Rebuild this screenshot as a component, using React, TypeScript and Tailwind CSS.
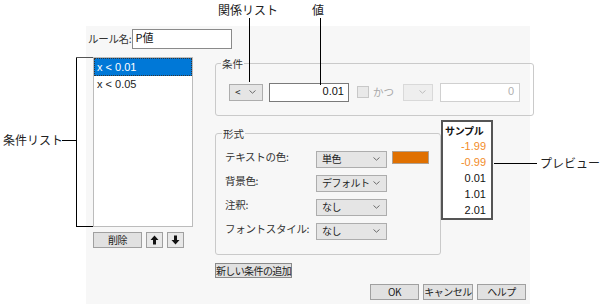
import React from 'react';

const jp = "font-['Noto_Sans_CJK_JP','Noto_Sans',sans-serif] whitespace-nowrap";
const lat = "font-['Liberation_Sans','Noto_Sans_CJK_JP',sans-serif] whitespace-nowrap";

const Chevron = ({ color = '#6b6b6b' }: { color?: string }) => (
  <svg width="7" height="4" viewBox="0 0 7 4">
    <path d="M0.5 0.5 L3.5 3.2 L6.5 0.5" fill="none" stroke={color} strokeWidth="1" />
  </svg>
);

const Select = ({ label, width, disabled }: { label?: string; width: string; disabled?: boolean }) => (
  <div
    className={`${width} h-[17px] flex items-center justify-between pl-[5px] pr-[6px] border ${
      disabled ? 'border-[#d9d9d9] bg-[#eeeeee]' : 'border-[#adadad] bg-[#e5e5e5]'
    } text-[10px] tracking-[-0.5px] text-[#222] ${jp}`}
  >
    <span className="leading-none">{label}</span>
    <Chevron color={disabled ? '#bdbdbd' : '#6b6b6b'} />
  </div>
);

const Button = ({ children, width }: { children: React.ReactNode; width: string }) => (
  <button
    className={`${width} h-[16px] border border-[#a0a0a0] bg-[#e1e1e1] text-[10px] tracking-[-0.5px] leading-none text-[#222] ${jp} flex items-center justify-center`}
  >
    {children}
  </button>
);

const Arrow = ({ down }: { down?: boolean }) => (
  <svg width="9" height="10" viewBox="0 0 9 10" className={down ? 'rotate-180' : ''}>
    <path d="M4.5 0.5 L8.5 5 L6 5 L6 9.5 L3 9.5 L3 5 L0.5 5 Z" fill="#111" />
  </svg>
);

export default function App() {
  const formatRows = [
    { label: 'テキストの色:', value: '単色', swatch: true },
    { label: '背景色:', value: 'デフォルト' },
    { label: '注釈:', value: 'なし' },
    { label: 'フォントスタイル:', value: 'なし' },
  ];

  return (
    <div className="relative w-[604px] h-[304px] bg-white overflow-hidden">
      <div className="ml-[86px] mt-[26px] w-[444px] h-[278px] bg-[#f7f7f7] flex flex-col">
        {/* rule name */}
        <div className="flex items-center mt-[3px] ml-[2px] gap-[1px]">
          <span className={`text-[10.5px] tracking-[-0.3px] text-[#333] ${jp}`}>ルール名:</span>
          <div className={`w-[100px] h-[20px] bg-white border border-[#8a8a8a] text-[11px] leading-none pl-[2px] pt-[2px] text-[#111] ${jp}`}>
            P値
          </div>
        </div>

        <div className="flex mt-[8px]">
          {/* condition list */}
          <div className="flex flex-col ml-[7px] w-[100px]">
            <div className="h-[170px] border border-[#bcbcbc] bg-white flex flex-col">
              <div className={`h-[18px] bg-[#0078d7] text-white text-[11px] leading-[16px] pl-[2px] border border-dotted border-[#333] ${lat}`}>
                x &lt; 0.01
              </div>
              <div className={`h-[17px] text-[#222] text-[11px] leading-[17px] pl-[3px] ${lat}`}>x &lt; 0.05</div>
            </div>
            <div className="flex mt-[5px] gap-[4px]">
              <Button width="w-[49px]">削除</Button>
              <button className="w-[17px] h-[16px] border border-[#a0a0a0] bg-[#e8e8e8] flex items-center justify-center">
                <Arrow />
              </button>
              <button className="w-[17px] h-[16px] border border-[#a0a0a0] bg-[#e8e8e8] flex items-center justify-center">
                <Arrow down />
              </button>
            </div>
          </div>

          {/* right column */}
          <div className="flex flex-col ml-[22px] w-[312px]">
            <fieldset className="w-[312px] h-[60px] border border-[#cacaca] rounded-[3px] px-[13px] -mt-[1px]">
              <legend className={`text-[10.5px] text-[#333] px-[1px] ml-[-8px] ${jp}`}>条件</legend>
              <div className="flex items-center mt-[11px]">
                <Select label="<" width="w-[34px]" />
                <div className={`ml-[6px] w-[80px] h-[19px] bg-white border border-[#7a7a7a] text-[11px] leading-none text-right pr-[4px] pt-[2px] text-[#111] ${lat}`}>
                  0.01
                </div>
                <div className="ml-[8px] w-[12px] h-[12px] border border-[#c8c8c8] bg-[#e9e9e9]" />
                <span className={`ml-[4px] text-[10.5px] text-[#a8a8a8] ${jp}`}>かつ</span>
                <div className="ml-[9px]">
                  <Select width="w-[30px]" disabled />
                </div>
                <div className={`ml-[7px] w-[80px] h-[19px] bg-white border border-[#d0d0d0] text-[11px] leading-none text-right pr-[5px] pt-[2px] text-[#b0b0b0] ${lat}`}>
                  0
                </div>
              </div>
            </fieldset>

            <div className="flex items-start mt-[4px]">
              <fieldset className="w-[226px] h-[129px] border border-[#cacaca] rounded-[3px] mt-[6px] pl-[9px]">
                <legend className={`text-[10.5px] text-[#333] px-[1px] ml-[-3px] ${jp}`}>形式</legend>
                <div className="flex flex-col gap-[7px] mt-[9px]">
                  {formatRows.map((r) => (
                    <div key={r.label} className="flex items-center">
                      <span className={`w-[91px] text-[10.5px] tracking-[-0.3px] text-[#333] -mt-[4px] ${jp}`}>{r.label}</span>
                      <Select label={r.value} width="w-[71px]" />
                      {r.swatch && <div className="ml-[5px] -mt-[3px] w-[37px] h-[13px] bg-[#e07000] border border-[#b0a090]" />}
                    </div>
                  ))}
                </div>
              </fieldset>
              <div className={`w-[52px] h-[100px] border-2 border-[#555] bg-white flex flex-col items-end pr-[5px] text-[11px] ${lat}`}>
                <span className={`self-start pl-[2px] pt-[2px] font-bold text-[10px] tracking-[-0.3px] text-[#111] leading-[14px] ${jp}`}>サンプル</span>
                <span className="leading-[16px] text-[#f28c28]">-1.99</span>
                <span className="leading-[16px] text-[#f28c28]">-0.99</span>
                <span className="leading-[16px] text-[#111]">0.01</span>
                <span className="leading-[16px] text-[#111]">1.01</span>
                <span className="leading-[16px] text-[#111]">2.01</span>
              </div>
            </div>

            <div className="mt-[8px]">
              <button className={`w-[77px] h-[15px] border border-[#8a8a8a] bg-[#e1e1e1] text-[10px] tracking-[-0.6px] leading-none text-[#222] ${jp} flex items-center justify-center`}>
                新しい条件の追加
              </button>
            </div>
          </div>
        </div>

        <div className="flex justify-end gap-[4px] mr-[4px] mt-auto mb-[4px]">
          <Button width="w-[49px]">OK</Button>
          <Button width="w-[50px]">キャンセル</Button>
          <Button width="w-[49px]">ヘルプ</Button>
        </div>
      </div>

      {/* callouts */}
      <span className={`absolute left-[218px] top-[1px] text-[12px] text-[#222] ${jp}`}>関係リスト</span>
      <div className="absolute left-[249px] top-[18px] w-px h-[64px] bg-black" />
      <span className={`absolute left-[312px] top-[1px] text-[12px] text-[#222] ${jp}`}>値</span>
      <div className="absolute left-[320px] top-[18px] w-px h-[67px] bg-black" />

      <span className={`absolute left-[3px] top-[131px] text-[12px] text-[#222] ${jp}`}>条件リスト</span>
      <div className="absolute left-[62px] top-[140px] w-[14px] h-px bg-black" />
      <div className="absolute left-[76px] top-[57px] w-px h-[170px] bg-black" />
      <div className="absolute left-[76px] top-[57px] w-[17px] h-px bg-[#555]" />
      <div className="absolute left-[76px] top-[226px] w-[17px] h-px bg-black" />

      <div className="absolute left-[494px] top-[163px] w-[43px] h-px bg-black" />
      <span className={`absolute left-[540px] top-[154px] text-[12px] text-[#222] ${jp}`}>プレビュー</span>
    </div>
  );
}
